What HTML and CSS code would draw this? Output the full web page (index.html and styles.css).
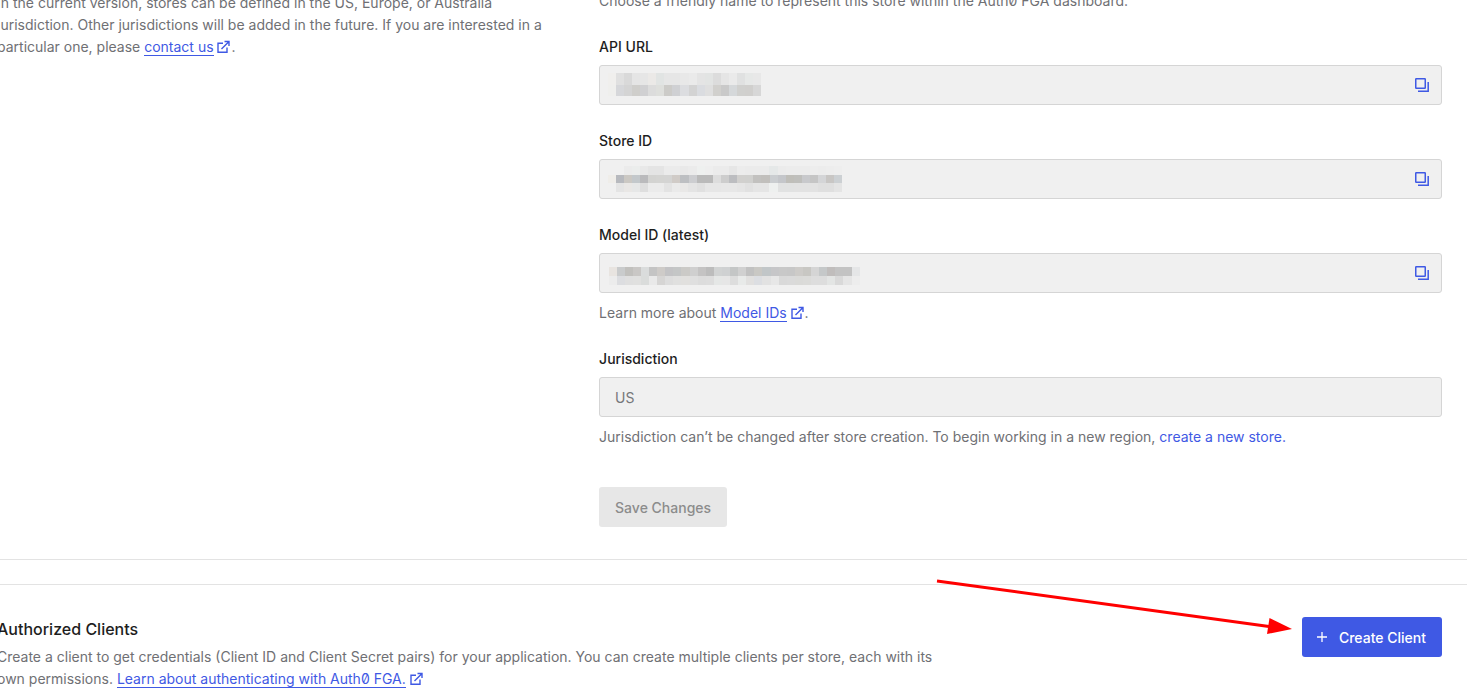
FILE: index.html
```html
<!DOCTYPE html>
<html lang="en">
<head>
<meta charset="utf-8">
<title>Store settings</title>
<link rel="stylesheet" href="styles.css">
</head>
<body>
<svg class="symbols">
  <symbol id="external" viewBox="0 0 14 14">
    <path d="M6 3.200H1v9h9V7.500M7.500 1.500h4.500V6M11.800 1.700L4.500 9" fill="none" stroke="currentColor" stroke-width="1.400"/>
  </symbol>
  <symbol id="copy" viewBox="0 0 16 16">
    <rect x="1.750" y="1.750" width="9.500" height="9.500" rx=".5" fill="none" stroke="currentColor" stroke-width="1.500"/>
    <path d="M14.200 5v9.200H4" fill="none" stroke="currentColor" stroke-width="1.500"/>
  </symbol>
</svg>
<main class="page">
  <section class="settings">
    <div class="intro">
      <p class="text">In the current version, stores can be defined in the US, Europe, or Australia jurisdiction. Other jurisdictions will be added in the future. If you are interested in a particular one, please <a class="link" href="#">contact us</a> <svg class="external"><use href="#external"/></svg>.</p>
    </div>
    <form class="form">
      <p class="text name-help">Choose a friendly name to represent this store within the Auth0 FGA dashboard.</p>
      <div class="field">
        <label class="label" for="api-url">API URL</label>
        <div class="control">
          <input class="input" id="api-url" type="text" disabled>
          <svg class="mosaic" data-mosaic="api"></svg>
          <button class="copy" type="button" aria-label="Copy API URL"><svg class="copy-icon"><use href="#copy"/></svg></button>
        </div>
      </div>
      <div class="field">
        <label class="label" for="store-id">Store ID</label>
        <div class="control">
          <input class="input" id="store-id" type="text" disabled>
          <svg class="mosaic" data-mosaic="store"></svg>
          <button class="copy" type="button" aria-label="Copy store ID"><svg class="copy-icon"><use href="#copy"/></svg></button>
        </div>
      </div>
      <div class="field field-helped">
        <label class="label" for="model-id">Model ID (latest)</label>
        <div class="control">
          <input class="input" id="model-id" type="text" disabled>
          <svg class="mosaic" data-mosaic="model"></svg>
          <button class="copy" type="button" aria-label="Copy model ID"><svg class="copy-icon"><use href="#copy"/></svg></button>
        </div>
        <p class="text help">Learn more about <a class="link" href="#">Model IDs</a> <svg class="external"><use href="#external"/></svg>.</p>
      </div>
      <div class="field field-last">
        <label class="label" for="jurisdiction">Jurisdiction</label>
        <input class="input" id="jurisdiction" type="text" value="US" disabled>
        <p class="text help">Jurisdiction can’t be changed after store creation. To begin working in a new region, <a class="link link-plain" href="#">create a new store.</a></p>
      </div>
      <button class="button button-save" type="submit" disabled>Save Changes</button>
    </form>
  </section>
  <section class="clients">
    <div class="clients-copy">
      <h2 class="heading">Authorized Clients</h2>
      <p class="text">Create a client to get credentials (Client ID and Client Secret pairs) for your application. You can create multiple clients per store, each with its own permissions. <a class="link" href="#">Learn about authenticating with Auth0 FGA.</a> <svg class="external"><use href="#external"/></svg></p>
    </div>
    <div class="action">
      <button class="button button-create" type="button"><svg class="plus" viewBox="0 0 12 12"><path d="M6 1v10M1 6h10" stroke="currentColor" stroke-width="1.300"/></svg>Create Client</button>
      <svg class="arrow" viewBox="0 0 356 60"><path d="M1 3L333 48.500" stroke="#f00" stroke-width="3"/><path d="M333.500 40L356 51L331 56z" fill="#f00"/></svg>
    </div>
  </section>
</main>
<script src="mosaic.js"></script>
</body>
</html>
```
FILE: styles.css
```css
* {
  box-sizing: border-box;
}

body {
  margin: 0;
  overflow: hidden;
  background: #fff;
  color: #1e212a;
  font-family: Inter, "Liberation Sans", sans-serif;
  font-size: 14px;
  font-feature-settings: "zero";
}

.symbols {
  display: none;
}

.page {
  margin: -8px 0 0 -3px;
}

.settings {
  display: grid;
  grid-template-columns: 5fr 7fr;
  padding: 0 25px 32px 0;
  border-bottom: 1px solid #e3e3e3;
}

.intro {
  padding-right: 48px;
}

.text {
  margin: 0;
  line-height: 22px;
  color: #6f7074;
}

.name-help {
  margin: -2px 0 25px;
}

.link {
  color: #3f59e4;
  text-decoration: none;
  border-bottom: 1px solid currentColor;
}

.link-plain {
  border-bottom: 0;
}

.external {
  width: 14px;
  height: 14px;
  vertical-align: -2px;
  color: #3f59e4;
}

.field {
  margin-bottom: 26px;
}

.field-helped {
  margin-bottom: 25px;
}

.field-last {
  margin-bottom: 39px;
}

.label {
  display: block;
  margin-bottom: 8px;
  line-height: 20px;
  font-weight: 500;
  color: #1e1e1e;
}

.control {
  position: relative;
}

.input {
  display: block;
  width: 100%;
  height: 40px;
  padding: 0 15px;
  border: 1px solid #d5d5d5;
  border-radius: 3px;
  background: #f0f0f0;
  color: #76777a;
  font: inherit;
}

.mosaic {
  position: absolute;
  top: 0;
  left: 0;
  width: 280px;
  height: 40px;
  pointer-events: none;
}

.copy {
  position: absolute;
  top: 12px;
  right: 12px;
  width: 16px;
  height: 16px;
  padding: 0;
  border: 0;
  background: none;
  color: #3f59e4;
}

.copy-icon {
  display: block;
  width: 16px;
  height: 16px;
}

.help {
  margin-top: 9px;
}

.button {
  display: flex;
  align-items: center;
  height: 40px;
  padding: 0 16px;
  border: 0;
  border-radius: 3px;
  font: inherit;
  font-weight: 500;
  white-space: nowrap;
}

.button-save {
  background: #e7e7e7;
  color: #8c8c8c;
}

.button-create {
  gap: 11px;
  padding-left: 14px;
  background: #3f59e4;
  color: #fff;
}

.plus {
  width: 12px;
  height: 12px;
}

.clients {
  display: flex;
  justify-content: space-between;
  margin-top: 24px;
  padding: 32px 25px 32px 0;
  border-top: 1px solid #e3e3e3;
}

.clients-copy {
  max-width: 960px;
}

.heading {
  margin: 0 0 5px;
  font-size: 16px;
  line-height: 24px;
  font-weight: 500;
  color: #1e1e1e;
}

.action {
  position: relative;
  flex: none;
}

.arrow {
  position: absolute;
  top: -39px;
  right: 150px;
  width: 356px;
  height: 60px;
  pointer-events: none;
}
```
FILE: mosaic.js
```js
// Masks for hidden values: each row is [top, height, left, cell colours].
const mosaics = {
  api: [
    [8, 12, 9, "f0efed e0e0e0 d9d9d9 e5e5e5 e6e6e6 ebe9e7 e1e4e3 e6e6e6 e6e6e6 e8e8e8 eaeaea e4e4e4 e2e4e3 dcdcdc e5e5e5 eaeaea e0e1e1 e6e8e7 e8e8e8"],
    [20, 11, 9, "efefed d6d7da d4d4d4 cfcecb d0d0d2 dcdcdc dedfdc cccbc8 cfd0d3 dcdde0 d3d3d3 dadce0 dfdfdf d1d0cd c9c9c9 d5d8da d0d0ce d0cfcd d7d7d7"]
  ],
  store: [
    [7, 9, 17, "f0f0f0 ebebeb ebedec e8e8e8 e4e4e4 e4e4e4 ebebeb ebebeb e9e9e9 ebebeb eef0ef eeeeee ebebeb ebebeb e6e6e6 ececec ebebeb ebebeb ebebeb e5e8e8 ebebeb ececec ececec ececec ededed ececec ededed eeeeee"],
    [16, 8, 9, "efede9 b7b9be cbc8c3 c3c8cb bababc d3d3d1 d4d4d2 d4d4d3 d0cbc7 bdbfc2 cccdd0 bababa bababa dddddd cdcdcd bcbdc0 d1d0ce d0d0ce c2c1bf c1bfbc cacdd0 c4c6ca bfbeb9 bfbfbc c8c9cc c5c5c5 d4d5d7 c8c6c4 ccd0d3"],
    [24, 9, 17, "e4e4e4 e9e7e5 e6e7e7 dedede ebebeb ebebeb e3e3e3 eaeaea e9e8e7 e4e4e4 e0e0e0 e6e6e6 e6e6e6 e7e7e7 e7e7e7 e5e5e5 e1e1e1 e5e5e5 e5e5e5 eef0ef e1e2e2 e1e2e2 e2e2e2 e2e2e2 e2e2e2 dfdfdf dfdfdf e4e4e4"]
  ],
  model: [
    [14, 9, 10, "e8e4e0 c9cbcc c1c0bd c9c7c5 dadcdc c4c4c4 cecbc8 c3c3c5 c4c6c6 cbcac7 cfcfcf c4c3c3 bcbcbc d1d3d3 cfd1d2 c4c6c6 d0d0d0 c1c1c1 c9c8c4 c1c6c8 c6c6c8 c8c8c8 c7c7c7 cdcbc8 c8c7c3 d5d5d5 c5c8c9 c0bdbc c3c3c3 c3c3c3 e5e6e7"],
    [23, 9, 10, "ececec dcdde0 dfdfdf e0e0df dadcdb e9e9e9 d6d5d4 dddddd e0e0df e1e0de dfdfdf dcdcdc dddddd e5e7e6 e6e6e6 dddddd e8eae9 e1e0df dcdee2 e2e2e2 e7e7e7 d9d9d9 dadada dadad8 dbdbd9 dddddd dddddd e3e5e4 d9d9d9 e5e5e5 ededed"]
  ]
};

// Every tenth cell is one pixel wider.
const edge = i => i * 8 + Math.floor(i / 10);

for (const svg of document.querySelectorAll("[data-mosaic]")) {
  for (const [top, height, left, colours] of mosaics[svg.dataset.mosaic]) {
    colours.split(" ").forEach((colour, i) => {
      const cell = document.createElementNS("http://www.w3.org/2000/svg", "rect");
      cell.setAttribute("x", left + edge(i));
      cell.setAttribute("y", top);
      cell.setAttribute("width", edge(i + 1) - edge(i));
      cell.setAttribute("height", height);
      cell.setAttribute("fill", "#" + colour);
      cell.setAttribute("shape-rendering", "crispEdges");
      svg.append(cell);
    });
  }
}
```
